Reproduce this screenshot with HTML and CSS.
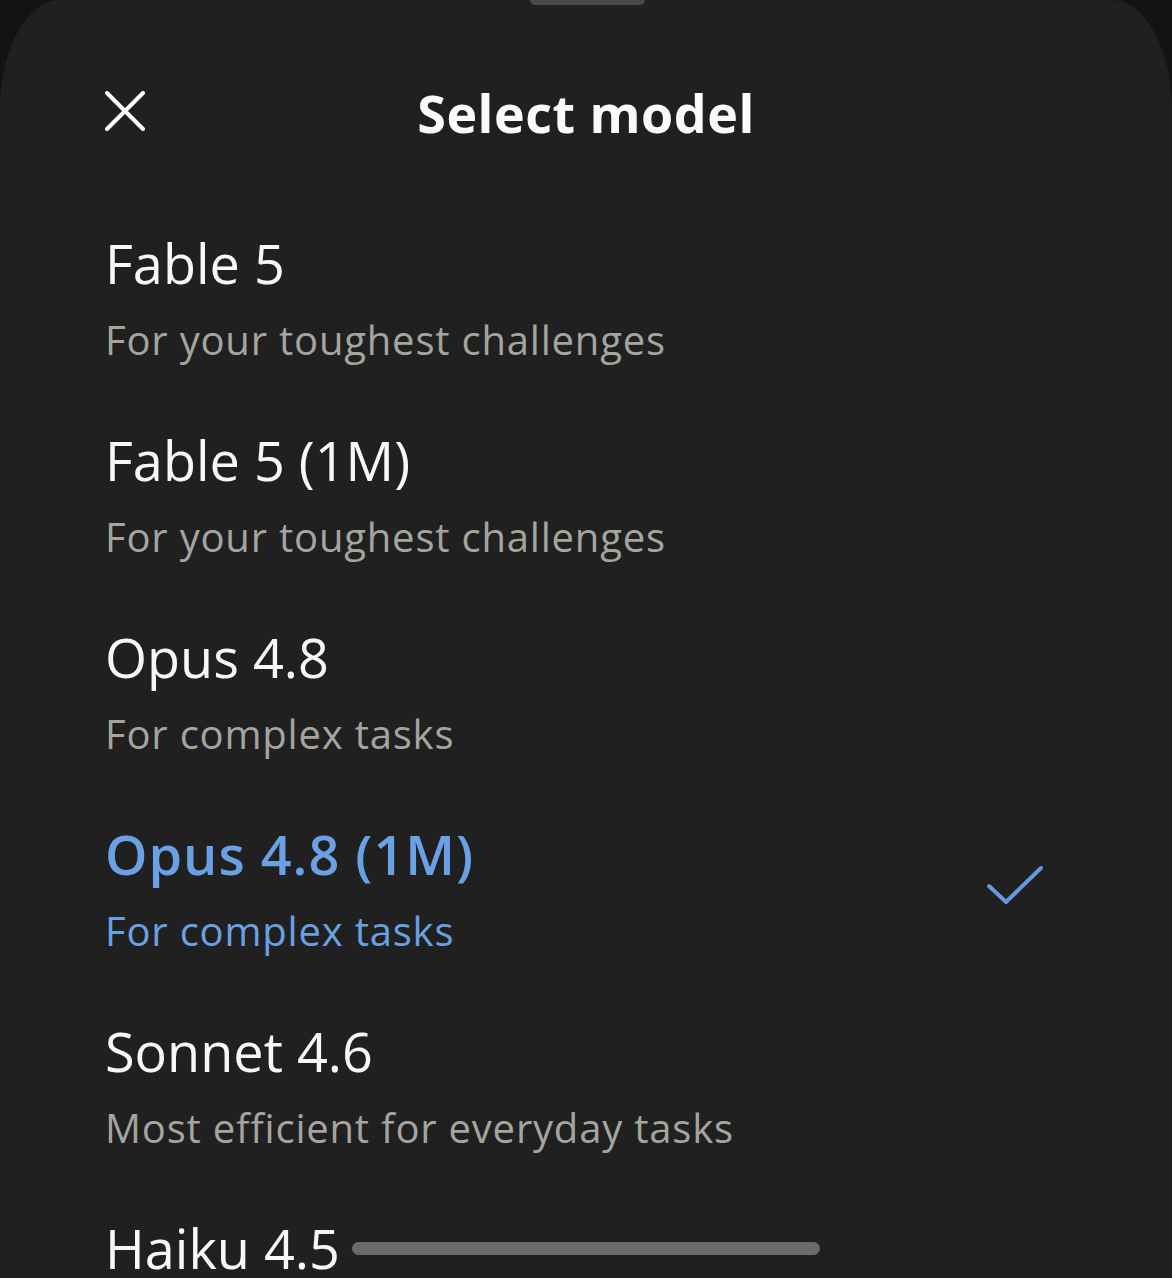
FILE: index.html
```html
<!DOCTYPE html>
<html lang="en">
<head>
    <meta charset="UTF-8">
    <meta name="viewport" content="width=device-width, initial-scale=1.0">
    <title>Select model</title>
    <link rel="stylesheet" href="styles.css">
</head>
<body>
    <div class="sheet">
        <div class="handle"></div>

        <div class="sheet-header">
            <button class="close-btn" aria-label="Close">
                <svg width="40" height="40" viewBox="0 0 40 40">
                    <path d="M2 2 L38 38 M38 2 L2 38" stroke="#ffffff" stroke-width="4" stroke-linecap="round" fill="none"/>
                </svg>
            </button>
            <h1>Select model</h1>
            <div></div>
        </div>

        <ul class="model-list">
            <li class="model">
                <div class="model-text">
                    <div class="model-name">Fable 5</div>
                    <div class="model-desc">For your toughest challenges</div>
                </div>
            </li>
            <li class="model">
                <div class="model-text">
                    <div class="model-name">Fable 5 (1M)</div>
                    <div class="model-desc">For your toughest challenges</div>
                </div>
            </li>
            <li class="model">
                <div class="model-text">
                    <div class="model-name">Opus 4.8</div>
                    <div class="model-desc">For complex tasks</div>
                </div>
            </li>
            <li class="model selected">
                <div class="model-text">
                    <div class="model-name">Opus 4.8 (1M)</div>
                    <div class="model-desc">For complex tasks</div>
                </div>
                <svg class="check" width="58" height="42" viewBox="0 0 58 42">
                    <path d="M3 22 L20 38 L55 4" stroke="#629adf" stroke-width="4" stroke-linecap="round" stroke-linejoin="round" fill="none"/>
                </svg>
            </li>
            <li class="model">
                <div class="model-text">
                    <div class="model-name">Sonnet 4.6</div>
                    <div class="model-desc">Most efficient for everyday tasks</div>
                </div>
            </li>
            <li class="model">
                <div class="model-text">
                    <div class="model-name">Haiku 4.5</div>
                    <div class="model-desc">Fastest for quick answers</div>
                </div>
            </li>
        </ul>
    </div>

    <div class="nav-pill"></div>
</body>
</html>
```

FILE: styles.css
```css
* {
    margin: 0;
    padding: 0;
    box-sizing: border-box;
    font-family: 'Open Sans', 'Noto Sans', sans-serif;
}

body {
    width: 1172px;
    height: 1278px;
    overflow: hidden;
    background-color: #131313;
    position: relative;
}

.sheet {
    position: relative;
    height: 100%;
    background-color: #202020;
    border-radius: 60px 60px 0 0 / 110px 110px 0 0;
}

.handle {
    position: absolute;
    top: -6px;
    left: 530px;
    width: 115px;
    height: 11px;
    border-radius: 6px;
    background-color: #4a4a4a;
}

.sheet-header {
    display: grid;
    grid-template-columns: 1fr auto 1fr;
    align-items: center;
    padding: 72px 105px 0;
    height: 154px;
}

.close-btn {
    width: 40px;
    height: 40px;
    margin-bottom: 4px;
    background: none;
    border: none;
    display: flex;
}

h1 {
    color: #fafafa;
    font-size: 52px;
    font-weight: 700;
    line-height: 80px;
    letter-spacing: 0.5px;
}

.model-list {
    list-style: none;
    margin-top: 47px;
}

.model {
    display: flex;
    align-items: center;
    justify-content: space-between;
    padding: 25px 128px 27px 105px;
    height: 197px;
}

.model-name {
    color: #f7f7f7;
    font-size: 54px;
    line-height: 72px;
}

.model-desc {
    margin-top: 11px;
    color: #a5a49f;
    font-size: 40px;
    line-height: 60px;
    letter-spacing: 0.8px;
}

.selected .model-name {
    color: #6aa0e4;
    font-weight: 600;
    letter-spacing: 1px;
}

.selected .model-desc {
    color: #6aa0e4;
}

.check {
    margin-top: -10px;
}

.nav-pill {
    position: absolute;
    left: 352px;
    top: 1242px;
    width: 468px;
    height: 13px;
    border-radius: 7px;
    background-color: #6a6a6a;
}
```
